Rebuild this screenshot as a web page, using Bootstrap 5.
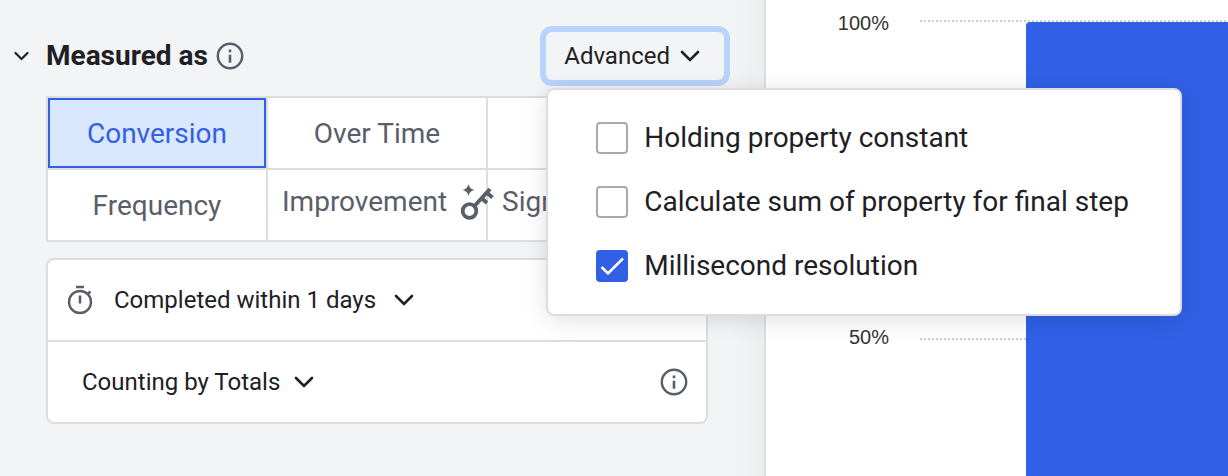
<!DOCTYPE html>
<html lang="en">
<head>
<meta charset="utf-8">
<meta name="viewport" content="width=device-width, initial-scale=1">
<title>Funnel settings</title>
<link rel="stylesheet" href="https://cdn.jsdelivr.net/npm/bootstrap@5.3.0/dist/css/bootstrap.min.css">
<style>
  :root {
    --ink: #1e2024;
    --ink-soft: #5a5e68;
    --line: #dcdde1;
    --accent: #3160e6;
    --ring: #b8d3fc;
  }
  body {
    font-family: Roboto, "Liberation Sans", sans-serif;
    font-size: 24px;
    line-height: 32px;
    color: var(--ink);
  }
  .workspace {
    grid-template-columns: 383fr 231fr;
    height: 100vh;
  }
  .panel {
    border-right: 2px solid var(--line);
    background: linear-gradient(to left, #eceef0, #f3f4f6 36px);
    padding: 32px 56px 0 46px;
  }
  .panel-head { margin: 0 -16px 16px -32px; }
  .plain-btn {
    border: 0;
    padding: 0;
    background: none;
    color: inherit;
    display: inline-flex;
    align-items: center;
  }
  .panel-title { font-size: 28px; line-height: 32px; }
  .soft { color: var(--ink-soft); }

  .advanced-btn {
    height: 48px;
    padding: 0 22px 0 18px;
    gap: 4px;
    border-radius: 6px;
    box-shadow: 0 0 0 6px var(--ring);
  }
  .advanced-menu {
    top: 100%;
    left: 0;
    z-index: 10;
    width: 636px;
    margin-top: 8px;
    padding: 32px 48px;
    border: 2px solid var(--line);
    border-radius: 8px;
    box-shadow: 0 4px 24px rgba(0, 0, 0, .12);
    font-size: 28px;
    white-space: nowrap;
  }
  .option-box.form-check-input {
    width: 32px;
    height: 32px;
    margin: 0;
    border: 2px solid #a8abb4;
    border-radius: 4px;
  }
  .option-box.form-check-input:checked {
    border-color: var(--accent);
    background-color: var(--accent);
    background-origin: border-box;
    background-size: 32px 32px;
    background-image: url("data:image/svg+xml,%3Csvg xmlns='http://www.w3.org/2000/svg' viewBox='0 0 32 32'%3E%3Cpath d='M5.500 17 12 23.500 27 8.500' fill='none' stroke='%23fff' stroke-width='2.600'/%3E%3C/svg%3E");
  }

  .segments {
    grid-template-columns: repeat(3, 1fr);
    grid-auto-rows: 70px;
    gap: 2px;
    padding: 2px;
    background: var(--line);
    margin-bottom: 16px;
  }
  .segment {
    min-width: 0;
    border: 0;
    padding: 2px 14px 0;
    background: #fff;
    color: var(--ink-soft);
    font-size: 28px;
    white-space: nowrap;
  }
  .segment.active {
    border: 2px solid var(--accent);
    background: #d9e7ff;
    color: var(--accent);
  }
  .segment-start {
    position: relative;
    display: flex;
    align-items: center;
    padding-bottom: 8px;
  }
  .segment-key { z-index: 1; gap: 12px; }

  .rules {
    border: 2px solid var(--line);
    border-radius: 8px;
    background: #fff;
  }
  .rule-row { height: 80px; padding: 0 18px; }
  .rule-row + .rule-row { height: 82px; border-top: 2px solid var(--line); padding-left: 34px; }

  .chart {
    grid-template-columns: 154px 106px 1fr;
    grid-template-rows: 318px 1fr;
    font-family: "Liberation Sans", sans-serif;
    font-size: 20px;
    color: #333;
  }
  .tick {
    grid-column: 1 / -1;
    height: 24px;
    margin-top: 11px;
    gap: 31px;
  }
  .tick-label { width: 123px; text-align: right; line-height: 24px; }
  .tick-line {
    height: 2px;
    margin-bottom: 4px;
    background: repeating-linear-gradient(90deg, #c9ced6 0 2px, transparent 2px 4px);
  }
  .tick:nth-child(1) { grid-row: 1; }
  .tick:nth-child(2) { grid-row: 2; }
  .tick:nth-child(2) .tick-label { padding-bottom: 8px; }
  .funnel-bar {
    grid-column: 3;
    grid-row: 1 / -1;
    margin-top: 22px;
    border-radius: 4px 0 0 0;
    background: var(--accent);
  }
</style>
</head>
<body class="overflow-hidden">
<svg class="d-none" xmlns="http://www.w3.org/2000/svg">
  <symbol id="chevron" viewBox="0 0 24 24"><path d="M4 8 12 16 20 8" fill="none" stroke="currentColor" stroke-width="2.600" stroke-linecap="round" stroke-linejoin="miter"/></symbol>
  <symbol id="info" viewBox="0 0 28 28">
    <circle cx="14" cy="14" r="12.200" fill="none" stroke="currentColor" stroke-width="2.400"/>
    <path d="M12.700 7.500h2.600v2.700h-2.600zM12.700 12.700h2.600v8h-2.600z" fill="currentColor"/>
  </symbol>
</svg>

<div class="workspace d-grid">
  <main class="panel">
    <header class="panel-head d-flex align-items-center justify-content-between">
      <div class="d-flex align-items-center">
        <button type="button" class="plain-btn" aria-label="Collapse section">
          <svg width="16" height="16" viewBox="0 0 16 16"><path d="M1.500 5 7.500 11 13.500 5" fill="none" stroke="currentColor" stroke-width="2.200" stroke-linecap="round"/></svg>
        </button>
        <h2 class="panel-title fw-bold mb-0 ms-3">Measured as</h2>
        <button type="button" class="plain-btn soft ms-2" aria-label="About this setting"><svg width="28" height="28"><use href="#info"/></svg></button>
      </div>
      <div class="position-relative">
        <button type="button" class="plain-btn advanced-btn" aria-expanded="true" aria-controls="advanced-menu">Advanced
          <svg class="ms-1" width="24" height="24"><use href="#chevron"/></svg>
        </button>
        <div id="advanced-menu" class="advanced-menu position-absolute bg-white vstack">
          <div class="d-flex align-items-center gap-3 mb-4 pb-2">
            <input class="form-check-input option-box" type="checkbox" id="opt-hold">
            <label for="opt-hold">Holding property constant</label>
          </div>
          <div class="d-flex align-items-center gap-3 mb-4 pb-2">
            <input class="form-check-input option-box" type="checkbox" id="opt-sum">
            <label for="opt-sum">Calculate sum of property for final step</label>
          </div>
          <div class="d-flex align-items-center gap-3">
            <input class="form-check-input option-box" type="checkbox" id="opt-ms" checked>
            <label for="opt-ms">Millisecond resolution</label>
          </div>
        </div>
      </div>
    </header>

    <div class="segments d-grid" role="group" aria-label="Measured as">
      <button type="button" class="segment active" aria-pressed="true">Conversion</button>
      <button type="button" class="segment">Over Time</button>
      <button type="button" class="segment" aria-label="Third measure"></button>
      <button type="button" class="segment">Frequency</button>
      <button type="button" class="segment segment-start segment-key">Improvement
        <svg class="flex-shrink-0" width="36" height="36" viewBox="0 0 36 36" fill="none" stroke="currentColor">
          <circle cx="10.500" cy="27" r="6.800" stroke-width="3.800"/>
          <path d="M15.500 22 31 5M27.500 8.500l6 5M22.500 14l5.500 5" stroke-width="4"/>
          <path d="M9.500 0q.9 5.100 6 6-5.100.9-6 6Q8.600 6.900 3.500 6 8.600 5.100 9.500 0z" fill="currentColor" stroke="none"/>
        </svg>
      </button>
      <button type="button" class="segment segment-start">Significance</button>
    </div>

    <section class="rules">
      <div class="rule-row d-flex align-items-center">
        <svg class="soft" width="28" height="30" viewBox="0 0 28 30" fill="none" stroke="currentColor" stroke-width="2.400">
          <circle cx="14" cy="17" r="11"/>
          <path d="M10 2h8M14 10.500v8M21.500 9 24.500 6.500" stroke-width="2.600"/>
        </svg>
        <button type="button" class="plain-btn gap-2 ms-3 ps-1">Completed within 1 days
          <svg class="ms-2" width="24" height="24"><use href="#chevron"/></svg>
        </button>
      </div>
      <div class="rule-row d-flex align-items-center justify-content-between">
        <button type="button" class="plain-btn gap-2">Counting by Totals
          <svg class="ms-1" width="24" height="24"><use href="#chevron"/></svg>
        </button>
        <button type="button" class="plain-btn soft" aria-label="About counting"><svg width="28" height="28"><use href="#info"/></svg></button>
      </div>
    </section>
  </main>

  <section class="chart d-grid bg-white" aria-label="Conversion chart">
    <div class="tick d-flex align-items-center"><span class="tick-label">100%</span><span class="tick-line flex-fill"></span></div>
    <div class="tick d-flex align-items-center"><span class="tick-label">50%</span><span class="tick-line flex-fill"></span></div>
    <div class="funnel-bar"></div>
  </section>
</div>
<script src="https://cdn.jsdelivr.net/npm/bootstrap@5.3.0/dist/js/bootstrap.bundle.min.js"></script>
</body>
</html>
